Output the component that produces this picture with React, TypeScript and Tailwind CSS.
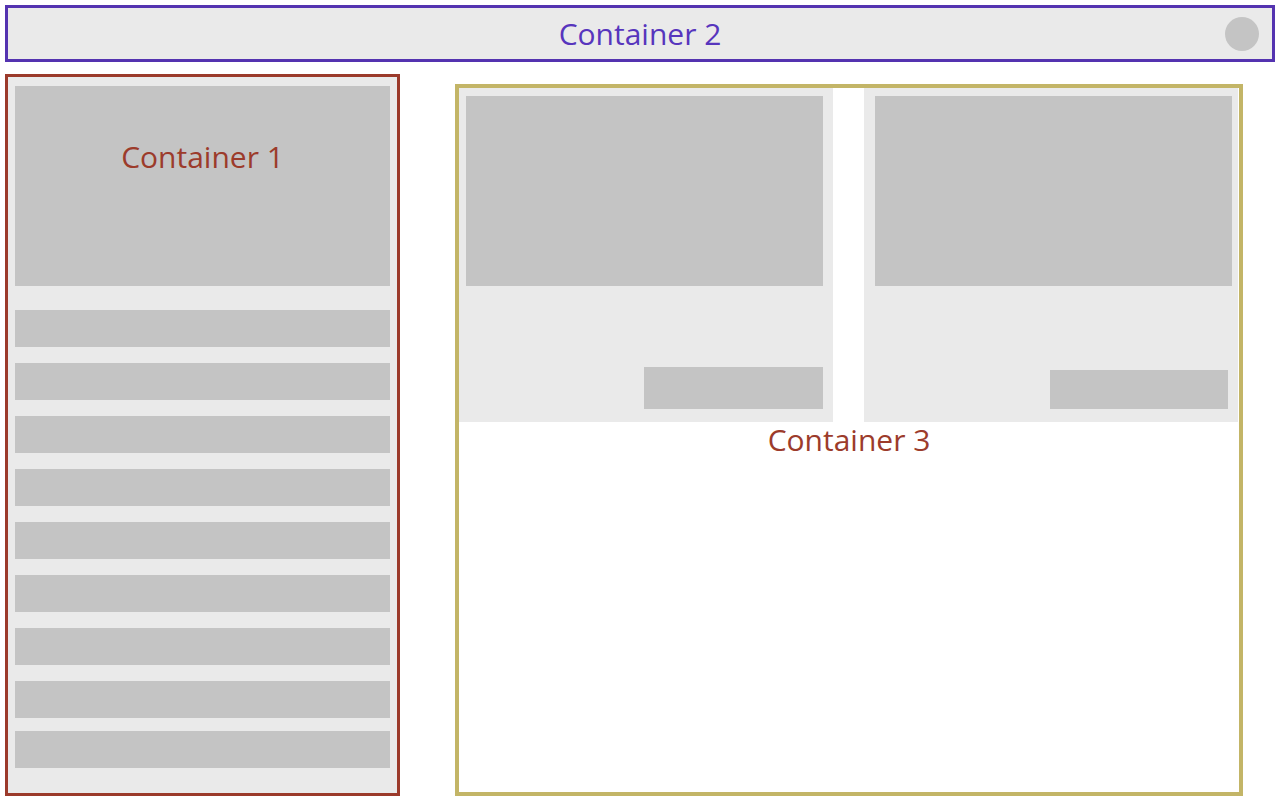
import React from 'react';

const font = { fontFamily: '"Open Sans", "Noto Sans", sans-serif' };

const Card: React.FC<{ imgPad: string; btnPad: string; btnSize: string }> = ({ imgPad, btnPad, btnSize }) => (
  <div className="flex h-[334px] w-[374px] flex-col bg-[#eaeaea]">
    <div className={`pt-[8px] ${imgPad}`}>
      <div className="h-[190px] bg-[#c4c4c4]" />
    </div>
    <div className={`mt-auto flex justify-end pb-[13px] ${btnPad}`}>
      <div className={`bg-[#c4c4c4] ${btnSize}`} />
    </div>
  </div>
);

export default function App() {
  const rows = [0, 1, 2, 3, 4, 5, 6, 7];

  return (
    <div className="h-[800px] w-[1280px] overflow-hidden bg-white" style={font}>
      {/* Container 2 */}
      <div className="ml-[5px] mt-[5px] grid h-[57px] w-[1270px] grid-cols-[1fr_auto_1fr] items-center border-[3px] border-[#5433b0] bg-[#eaeaea]">
        <div />
        <div className="text-[30px] leading-none text-[#5735bd]">Container 2</div>
        <div className="flex justify-end pr-[13px]">
          <div className="h-[34px] w-[34px] rounded-full bg-[#c4c4c4]" />
        </div>
      </div>

      <div className="mt-[12px] flex items-start">
        {/* Container 1 */}
        <div className="ml-[5px] h-[722px] w-[395px] border-[3px] border-[#9b3a2b] bg-[#eaeaea] px-[7px] pt-[9px]">
          <div className="flex h-[200px] justify-center bg-[#c4c4c4] pt-[56px]">
            <span className="text-[30px] leading-none text-[#9c3b2b]">Container 1</span>
          </div>
          <div className="mt-[24px] flex flex-col gap-[16px]">
            {rows.map((r) => (
              <div key={r} className="h-[37px] bg-[#c4c4c4]" />
            ))}
          </div>
          <div className="mt-[13px] h-[37px] bg-[#c4c4c4]" />
        </div>

        {/* Container 3 */}
        <div className="ml-[55px] mt-[10px] h-[712px] w-[788px] border-[4px] border-[#c3b567] bg-white">
          <div className="flex gap-[31px]">
            <Card imgPad="pl-[7px] pr-[10px]" btnPad="pr-[10px]" btnSize="h-[42px] w-[179px]" />
            <Card imgPad="pl-[11px] pr-[6px]" btnPad="pr-[10px]" btnSize="h-[39px] w-[178px]" />
          </div>
          <div className="mt-[3px] flex justify-center">
            <span className="text-[30px] leading-none text-[#9c3b2b]">Container 3</span>
          </div>
        </div>
      </div>
    </div>
  );
}
